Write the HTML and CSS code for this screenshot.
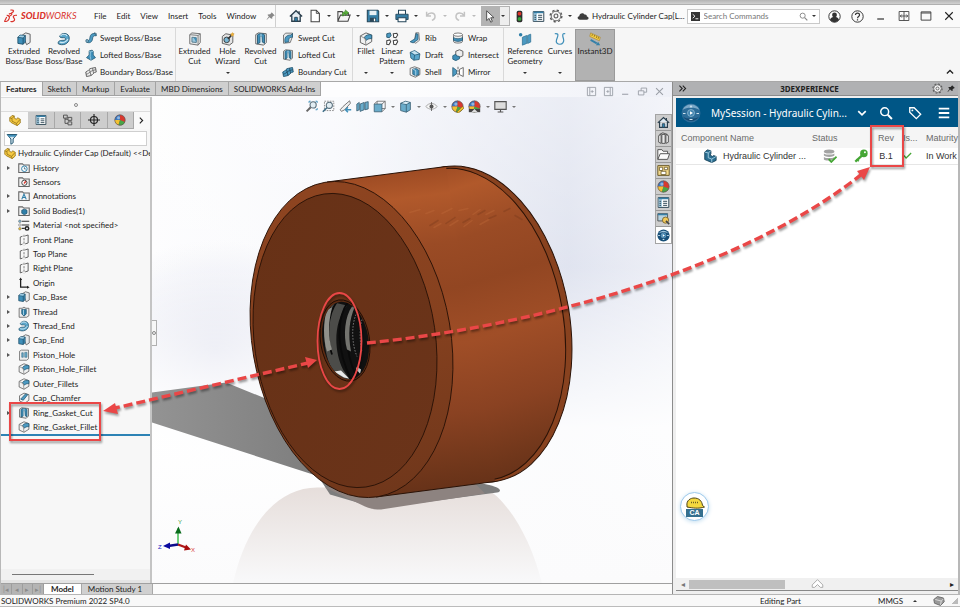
FILE: index.html
```html
<!DOCTYPE html>
<html lang="en">
<head>
<meta charset="utf-8">
<title>SOLIDWORKS Premium 2022</title>
<link rel="stylesheet" href="styles.css">
</head>
<body>
<svg class="sprite" aria-hidden="true">
  <defs>
    <symbol id="home" viewBox="0 0 16 16"><path d="M1 8.500 8 2l7 6.500M3.200 7.500V14h9.600V7.500" fill="#dfeaf1" stroke="#2b3f4d" stroke-width="1.500"/><path d="M6.500 14V9.500h3V14z" fill="#2f86b3" stroke="#2b3f4d"/><path d="M11.500 2.500v3" stroke="#2b3f4d" stroke-width="1.600"/></symbol>
    <symbol id="doc" viewBox="0 0 16 16"><path d="M3.500 1.500h6l3.500 3.500v9.500h-9.500z" fill="#fff" stroke="#444" stroke-width="1.200"/><path d="M9.500 1.500V5H13" fill="none" stroke="#444"/></symbol>
    <symbol id="open" viewBox="0 0 16 16"><path d="M1 14V3h5l1 2h6v3M1 14l3-7h11l-2.500 7z" fill="#f4f4f4" stroke="#444" stroke-width="1.200"/><path d="M6 8c0-4 1-5 3.500-5V1l4 3.300-4 3.300V5.500C8 5.500 7.500 6 7.500 8z" fill="#58ad3a" stroke="#2e7a1b" stroke-width=".6"/></symbol>
    <symbol id="save" viewBox="0 0 16 16"><path d="M1.500 1.500h12l1 1v12h-13z" fill="#377fa6" stroke="#24465a" stroke-width="1.200"/><path d="M4 2h8v5H4z" fill="#e9f0f4"/><path d="M4.500 10h7v4.500h-7z" fill="#2b4657"/><path d="M9 11h1.500v3H9z" fill="#fff"/></symbol>
    <symbol id="print" viewBox="0 0 16 16"><path d="M4 6V1.500h8V6" fill="#fff" stroke="#24465a" stroke-width="1.200"/><path d="M1 6h14v6H1z" fill="#377fa6" stroke="#24465a"/><path d="M3.500 10h9v4.500h-9z" fill="#fff" stroke="#24465a" stroke-width="1.200"/></symbol>
    <symbol id="undo" viewBox="0 0 16 16"><path d="M3 3v5h5M3.500 7.500c2-3.500 8-4 9 0 .5 2.500-1 4.500-3.500 5.500" fill="none" stroke="#c3c3c3" stroke-width="1.700"/></symbol>
    <symbol id="redo" viewBox="0 0 16 16"><path d="M13 3v5H8M12.500 7.500c-2-3.500-8-4-9 0-.5 2.500 1 4.500 3.500 5.500" fill="none" stroke="#c3c3c3" stroke-width="1.700"/></symbol>
    <symbol id="cursor" viewBox="0 0 16 16"><path d="M4.500 1v12l3-2.700 2 4.700 2-1-2-4.500h4z" fill="#fff" stroke="#444" stroke-width="1.100"/></symbol>
    <symbol id="light" viewBox="0 0 16 16"><rect x="4.500" y="1" width="7" height="14" rx="2" fill="#2d2d2d"/><circle cx="8" cy="4.500" r="2.300" fill="#e0342b"/><circle cx="8" cy="11" r="2.300" fill="#35a33b"/></symbol>
    <symbol id="list" viewBox="0 0 16 16"><path d="M1.500 2h13v12h-13z" fill="#fff" stroke="#2d4654" stroke-width="1.200"/><path d="M2 2.500h4v11H2z" fill="#9fc8de"/><path d="M2 2h12v2H2z" fill="#377fa6"/><path d="M3 6.500h2M3 9h2M3 11.500h2M7.500 6.500h5M7.500 9h5M7.500 11.500h5" stroke="#2d4654" stroke-width="1.200"/></symbol>
    <symbol id="gear" viewBox="0 0 16 16"><circle cx="8" cy="8" r="6.700" fill="none" stroke="#555" stroke-width="1.500" stroke-dasharray="2.600 2.660"/><circle cx="8" cy="8" r="5.500" fill="#f5f5f5" stroke="#555"/><circle cx="8" cy="8" r="2.200" fill="none" stroke="#555" stroke-width="1.200"/></symbol>
    <symbol id="cloud" viewBox="0 0 16 16"><path d="M4 13C0 13 0 8.500 3 8.200 3 4.500 8 2.500 10 6c2-.5 3.200.7 3.200 2.500C16.500 9 16 13 13 13z" fill="#3d3d3d"/></symbol>
    <symbol id="pin" viewBox="0 0 16 16"><path d="m9 2 5 5-1.500.5-2.500 2 0 3L8 12 5.500 9.800 1.500 14 1 13.500l3.500-4.800L2.500 6.500l.5-1 3.500-.3 2-2z" fill="#888"/></symbol>
    <symbol id="search" viewBox="0 0 16 16"><circle cx="6.500" cy="6.500" r="4.500" fill="none" stroke="currentColor" stroke-width="1.700"/><path d="m10 10 4.800 4.800" stroke="currentColor" stroke-width="2.200"/></symbol>
    <symbol id="prompt" viewBox="0 0 16 16"><path d="M0 0h16v16H0z" fill="#333"/><path d="m3 4 4 3.500L3 11M8 12h5" fill="none" stroke="#fff" stroke-width="1.600"/></symbol>
    <symbol id="user" viewBox="0 0 16 16"><circle cx="8" cy="8" r="7" fill="#fff" stroke="#333" stroke-width="1.200"/><circle cx="8" cy="6" r="3" fill="#333"/><path d="M2.500 12c1-3 3-3.500 5.500-3.500s4.500.5 5.500 3.500c-3 4-8 4-11 0z" fill="#333"/></symbol>
    <symbol id="help" viewBox="0 0 16 16"><circle cx="8" cy="8" r="7" fill="none" stroke="#333" stroke-width="1.200"/><path d="M5.500 6.200c0-3.200 5-3.200 5-.2 0 2-2.400 1.800-2.400 4M8 11.300V13" fill="none" stroke="#333" stroke-width="1.500"/></symbol>
    <symbol id="min" viewBox="0 0 16 16"><path d="M3 12h9" stroke="currentColor" stroke-width="1.500"/></symbol>
    <symbol id="span" viewBox="0 0 16 16"><path d="M1.500 2h13v12h-13zM8 2v12M3 8h10M5 6 3 8l2 2M11 6l2 2-2 2" fill="none" stroke="#444" stroke-width="1.200"/></symbol>
    <symbol id="max" viewBox="0 0 16 16"><path d="M1.500 2.500h13v11h-13zM1.500 4h13" fill="none" stroke="#444" stroke-width="1.300"/></symbol>
    <symbol id="close" viewBox="0 0 16 16"><path d="m3 3 10 10M13 3 3 13" stroke="currentColor" stroke-width="1.500"/></symbol>
    <symbol id="restore" viewBox="0 0 16 16"><path d="M2 7h8v6H2zM6 7V3h8v6h-4" fill="none" stroke="currentColor" stroke-width="1.300"/></symbol>
    <symbol id="pane" viewBox="0 0 16 16"><path d="M2 2h12v12H2zM5.500 2v12M11 8H8M9.500 6 7.500 8l2 2" fill="none" stroke="currentColor" stroke-width="1.300"/></symbol>

    <symbol id="extrude" viewBox="0 0 16 16"><path d="M6 3.500 10 1l5 1.500V12l-4 2.500z" fill="#e6e8e9" stroke="#555"/><path d="m1 6 2.500-2.500 6 .5v7.500L7 14l-6-1z" fill="#3f8fb9" stroke="#1f4f69"/><path d="m1 6 6 .7V14M7 6.700 9.500 4" fill="none" stroke="#1f4f69"/><path d="m1.500 5.800 2-1.800 5.200.4L7 6.200z" fill="#a4d0e6"/></symbol>
    <symbol id="revolve" viewBox="0 0 16 16"><path d="M3 5C5 0 14 .5 14 7c0 7-8 9-12.500 6.500C.5 10 4 9.500 8 9.500c2 0 2.500-2 1-2.800C7.500 6 3.500 7.500 3 5z" fill="#5aa6cb" stroke="#235670"/><path d="M4 4.500c2-2.500 6-2.500 7.500 0M3 11.500c3 1.500 8 0 9.500-3.500" fill="none" stroke="#cfe8f4" stroke-width="1.300"/></symbol>
    <symbol id="sweep" viewBox="0 0 16 16"><path d="M1.500 10.500C4 13 6 11 6.500 7.500 7 3.500 9 1.500 13.500 2l1.500 3c-4-.5-4.500 1-5 4.500-.6 4-4 6-7.500 4z" fill="#4c9ac2" stroke="#235670"/><ellipse cx="2.800" cy="12" rx="1.600" ry="2" fill="#9dcce3" stroke="#235670"/><path d="m12 1 3 1v3" fill="none" stroke="#235670"/></symbol>
    <symbol id="loft" viewBox="0 0 16 16"><path d="m5.500 2.500 4-1 1.500 1.500v5l3 3.500-6 3.500-6-3.500 3.500-3.500z" fill="#3f8fb9" stroke="#235670"/><path d="M5.500 2.500 7 4l4-1M7 4v6l1 5" fill="none" stroke="#a4d0e6"/></symbol>
    <symbol id="boundary" viewBox="0 0 16 16"><path d="M1 8c4-1 4-5 8-5l5-1 1 6c-4 0-4 4-8 5l-5 1z" fill="#eee" stroke="#555" stroke-width="1.200"/><path d="M1.500 11c5-1 5-5 13-6M6 5l2 8M10 3l1.500 7" fill="none" stroke="#555"/></symbol>
    <symbol id="boundcut" viewBox="0 0 16 16"><path d="M1 8c4-1 4-5 8-5l5-1 1 6c-4 0-4 4-8 5l-5 1z" fill="#4c9ac2" stroke="#235670" stroke-width="1.200"/><path d="M1.500 11c5-1 5-5 13-6M6 5l2 8M10 3l1.500 7" fill="none" stroke="#183e52"/></symbol>
    <symbol id="excut" viewBox="0 0 16 16"><path d="m2 3 2.500-2 9.500 1v10l-2.500 3L2 13.500z" fill="#e6e8e9" stroke="#666"/><path d="m2 3 9.500 1L14 2M11.500 4v11" fill="none" stroke="#777"/><path d="M4.500 6 9.500 6.500v5.500l-5-.5z" fill="#9cc8de" stroke="#4d7486"/><path d="M6.500 6.500h3v5z" fill="#3f8fb9"/></symbol>
    <symbol id="wizard" viewBox="0 0 16 16"><path d="m1.500 5 4-3 8 1.500V12l-4 3-8-2z" fill="#e4e4e4" stroke="#555"/><circle cx="6.500" cy="9" r="3.200" fill="#79b6d4" stroke="#333"/><path d="m8 8 6-6.500" stroke="#333" stroke-width="2"/><path d="m13 0 .8 1.700 1.900.3-1.500 1.300.3 2L13 4.200 11.500 5l.3-1.800-1.500-1.300 1.900-.2z" fill="#f0b23c"/></symbol>
    <symbol id="revcut" viewBox="0 0 16 16"><path d="m2 3 3-2 9 1v10l-3 3-9-1.500z" fill="#eef0f1" stroke="#555"/><path d="M4 3.500c0-2 8-2 8 0V13l-2.500-1.500L9 5H7v7L4 13.500z" fill="#3f8fb9" stroke="#235670"/><path d="M8 2v11" stroke="#cfe8f4"/></symbol>
    <symbol id="sweptcut" viewBox="0 0 16 16"><path d="M2 4 5 1.500h9V6l-3 8-9 1z" fill="#e6e8e9" stroke="#555"/><path d="M4 14c-1-6 1-10 8-10l2-2v5c-5 0-5 2-5 6z" fill="#4c9ac2" stroke="#235670"/></symbol>
    <symbol id="fillet" viewBox="0 0 16 16"><path d="M1.500 4.500 8 1l6.500 2.500V11L8 15l-6.500-3z" fill="#f0f1f1" stroke="#555"/><path d="M6 6c2.500-3 5.500-3.500 8.500-2.500v4c-3 0-4.500.5-6 2z" fill="#4c9ac2" stroke="#235670"/><path d="M1.500 4.500 7 7.500 8 15" fill="none" stroke="#888"/></symbol>
    <symbol id="pattern" viewBox="0 0 16 16"><path d="m2 2 4-1 1 3-2 2.500L2 6z" fill="#4c9ac2" stroke="#235670"/><path d="m9.500 2 4-.5 1 2-2 3-2.500-.5zM2 10l3.500-1 1 2-2 3.500L2 14zM9.500 10l4-1 1 2-2 3.500-2.500-.5z" fill="#fff" stroke="#444" stroke-width="1.200"/></symbol>
    <symbol id="rib" viewBox="0 0 16 16"><path d="M9 1h4l1 10-5 4-2-1z" fill="#e9e9e9" stroke="#666"/><path d="M9.500 2 8 9l-6.500 4 4 1.500L12 10V3z" fill="#4c9ac2" stroke="#235670"/></symbol>
    <symbol id="draft" viewBox="0 0 16 16"><path d="m1.500 4.500 6-2.500 7 4.500-1 7.500-7 1-4-3z" fill="#5aa6cb" stroke="#235670"/><path d="m1.500 4.500 6 3.500 7-1.500M7.500 8l-1 7" fill="none" stroke="#235670"/><path d="m3 4.400 4.500-1.600L13 6.200 7.800 7.200z" fill="#c7e2ef"/></symbol>
    <symbol id="shell" viewBox="0 0 16 16"><path d="m1.500 3 6-2 7 2.500v8l-6 3.500-7-3z" fill="#eee" stroke="#555"/><path d="m5 4 5-.5 3 2v6L9 13l-4-2z" fill="#3f8fb9" stroke="#235670"/><path d="m5 4 4 2v7" fill="none" stroke="#cfe8f4"/></symbol>
    <symbol id="wrap" viewBox="0 0 16 16"><path d="M2 3.500v9c0 3 12 3 12 0v-9" fill="#eee" stroke="#555"/><ellipse cx="8" cy="3.500" rx="6" ry="2.200" fill="#fff" stroke="#555"/><path d="M2 7.500c3 2 9 2 12 0v3.500c-3 2-9 2-12 0z" fill="#3f8fb9" stroke="#235670"/></symbol>
    <symbol id="intersect" viewBox="0 0 16 16"><path d="m5 3 5-2 4.500 2v6L10 11 5 9z" fill="#eee" stroke="#555" stroke-width="1.200"/><path d="m1 9 4-2 1 2 4 1v3l-5 2.500-4-2z" fill="#3f8fb9" stroke="#235670"/></symbol>
    <symbol id="mirror" viewBox="0 0 16 16"><path d="m1 2 5 3.500v5L1 14z" fill="#4c9ac2" stroke="#235670"/><path d="M8 1v14" stroke="#444" stroke-dasharray="3 1"/><path d="m15 2-5 2.500v7l5 2.500z" fill="#fff" stroke="#444"/></symbol>
    <symbol id="refgeo" viewBox="0 0 16 16"><path d="m5 6 5-2v9l-5 2zM11 4l3.500-1.500v9L11 13z" fill="#4c9ac2" stroke="#3a7c9e"/><circle cx="3" cy="3" r="2" fill="#2f7fa9"/></symbol>
    <symbol id="curves" viewBox="0 0 16 16"><path d="M2 2c6-1 3 4 2 7s1 5 4 5 5-3 4-6-2-7 2-6" fill="none" stroke="#3f8fb9" stroke-width="1.400"/></symbol>
    <symbol id="instant" viewBox="0 0 16 16"><path d="m3 1 11 5-1 4L2 5z" fill="#f6cf45" stroke="#a7822a" stroke-width=".7"/><path d="m5 2.500-.5 2M7.500 3.500l-.5 2M10 4.800l-.5 2M12 5.800l-.5 2" stroke="#6b5214" stroke-width=".8"/><path d="m3 9 7 4" stroke="#3580a8" stroke-width="2"/><path d="m9 15 5 0-2.500-4z" fill="#3580a8"/></symbol>

    <symbol id="part" viewBox="0 0 16 16"><path d="m1 5 3-3 3 .5 0 3 3 1.500 1.500-2L15 7v5l-4 3.500-8-4-2-2z" fill="#f5c944" stroke="#8f6d13"/><path d="m1 5 3 1 3-3.500M4 6v3.500l6 3 4.500-5M10 12.500l1 3" fill="none" stroke="#8f6d13"/></symbol>
    <symbol id="config" viewBox="0 0 16 16"><path d="M2 1.500h5v4H2zM8 4.500h5v4H8zM8 10.500h5v4H8zM4 5.500v7h4M4 7h4" fill="none" stroke="#555" stroke-width="1.300"/></symbol>
    <symbol id="target" viewBox="0 0 16 16"><circle cx="8" cy="8" r="4.700" fill="none" stroke="#222" stroke-width="1.500"/><path d="M8 0v16M0 8h16" stroke="#222" stroke-width="1.500"/></symbol>
    <symbol id="ball" viewBox="0 0 16 16"><circle cx="8" cy="8" r="7" fill="#d8392f"/><path d="M8 8V1a7 7 0 0 0-7 7z" fill="#3a79c2"/><path d="M8 8H1a7 7 0 0 0 5 6.700z" fill="#f2c232"/><path d="m8 8 6.500 2.500A7 7 0 0 1 6 14.700z" fill="#49a546"/><circle cx="8" cy="8" r="7" fill="none" stroke="#555" stroke-width=".8"/><circle cx="6" cy="5" r="2" fill="#fff" opacity=".45"/></symbol>
    <symbol id="funnel" viewBox="0 0 16 16"><path d="M1.500 2h13L9.500 8v5L6.500 15V8z" fill="#d5e8f1" stroke="#235670" stroke-width="1.300"/><path d="M2 2.500h12L12 5H4z" fill="#3f8fb9"/></symbol>
    <symbol id="folder" viewBox="0 0 16 16"><path d="M1 14V2.500h5L7.500 4H15v10z" fill="#f2f2f2" stroke="#666" stroke-width="1.400"/></symbol>
    <symbol id="f-hist" viewBox="0 0 16 16"><use href="#folder"/><circle cx="8.500" cy="9" r="3.700" fill="#fff" stroke="#2f7fa9" stroke-width="1.300"/><path d="M8.500 7v2.300h2" fill="none" stroke="#235670"/></symbol>
    <symbol id="f-sens" viewBox="0 0 16 16"><use href="#folder"/><circle cx="8.500" cy="9" r="3.500" fill="#fff" stroke="#444" stroke-width="1.300"/><path d="m8 10 2.500-3" stroke="#d8392f" stroke-width="1.800"/></symbol>
    <symbol id="f-ann" viewBox="0 0 16 16"><use href="#folder"/><path d="m5 12.500 3-7 3 7M6 10h4" fill="none" stroke="#2f7fa9" stroke-width="1.500"/></symbol>
    <symbol id="f-body" viewBox="0 0 16 16"><use href="#folder"/><path d="m5 7 3.500-1.500L12 7v4l-3.500 2L5 11z" fill="#2f7fa9" stroke="#235670"/></symbol>
    <symbol id="material" viewBox="0 0 16 16"><path d="M5 3h10M5 8h10M5 12.500h4" stroke="#333" stroke-width="1.500"/><circle cx="2.500" cy="3" r="1.700" fill="#7fb6d2" stroke="#666" stroke-width=".7"/><circle cx="2.500" cy="8" r="1.700" fill="#eee" stroke="#666" stroke-width=".7"/><circle cx="2.500" cy="13" r="1.700" fill="#f2c232" stroke="#666" stroke-width=".7"/><circle cx="12" cy="12.500" r="2.300" fill="none" stroke="#222" stroke-width="2"/></symbol>
    <symbol id="plane" viewBox="0 0 16 16"><path d="M3 4v10.500l3-1M3 4l3-1M9.500 2.500l4-1.200V12l-4 1.200" fill="none" stroke="#555" stroke-width="1.200"/><path d="M8 1v14" stroke="#555" stroke-dasharray="3 1.500"/></symbol>
    <symbol id="origin" viewBox="0 0 16 16"><path d="M3.500 3v10.500H13" fill="none" stroke="#222" stroke-width="1.700"/><path d="M1.500 4h4l-2-3.500zM12 11.500v4l3.500-2z" fill="#222"/></symbol>
    <symbol id="thread" viewBox="0 0 16 16"><path d="M1.500 3h4L8 1.500 10.500 3h4v10l-3 2h-10z" fill="#eee" stroke="#555"/><path d="M5 4.500h6v6l-3 3-3-3z" fill="#2f7fa9" stroke="#235670"/><path d="M7.300 5v7" stroke="#cfe8f4"/></symbol>
    <symbol id="hole" viewBox="0 0 16 16"><path d="m2 3 2.500-1.500H14V13l-2.500 2H2z" fill="#ececec" stroke="#666"/><path d="M5 5h2v6H5zM9 4.500h3V11H9z" fill="#6aaccb" stroke="#3a6f88" stroke-width=".8"/></symbol>
    <symbol id="chamfer" viewBox="0 0 16 16"><path d="M2 5 8 1.500l6.500 2V11L9 15l-7-3z" fill="#f4f4f4" stroke="#555"/><path d="m3.500 9.500 6.500-7 3 1L7 11z" fill="#4c9ac2" stroke="#235670"/></symbol>

    <symbol id="zoomfit" viewBox="0 0 16 16"><circle cx="10" cy="6" r="3.800" fill="#e2edf3" stroke="#556b78" stroke-width="1.300"/><path d="M7 9 2 14" stroke="#666" stroke-width="2.400"/><path d="M5 3.500V1.500h2M13 1.500h2v2M15 10v2h-2" fill="none" stroke="#3f8fb9" stroke-width="1.200"/></symbol>
    <symbol id="zoomarea" viewBox="0 0 16 16"><path d="M3 1.500h11.500V13H3z" fill="none" stroke="#777" stroke-dasharray="2 1.300"/><circle cx="9" cy="6.500" r="3.800" fill="#e2edf3" stroke="#556b78" stroke-width="1.300"/><path d="m6 9.500-5 5" stroke="#3f6f88" stroke-width="2"/></symbol>
    <symbol id="prev" viewBox="0 0 16 16"><path d="m13 1-8 7-3.500 4 1.500 2 4-2 7-8z" fill="#f1f1f1" stroke="#777" stroke-width="1.200"/><path d="M15 12H8m3-3-3 3 3 3" fill="none" stroke="#3f8fb9" stroke-width="1.800"/></symbol>
    <symbol id="section" viewBox="0 0 16 16"><path d="m1 5 3-2v9l-3 1.500zM5 5l5-2v9l-5 2zM11 3l4-1v9l-4 1z" fill="#6aaccb" stroke="#3a5f72"/></symbol>
    <symbol id="viewcube" viewBox="0 0 16 16"><path d="M5 1.500h10v9H5z" fill="none" stroke="#666"/><path d="M1.500 5H11v9.500H1.500z" fill="#6aaccb" stroke="#3a5f72"/><path d="m1.500 5 3.500-3.500M11 5l4-3.500M11 14.500l4-4" stroke="#666"/></symbol>
    <symbol id="cube" viewBox="0 0 16 16"><path d="m2 4 6-2.500L14 3v9l-5 3-7-2z" fill="#6aaccb" stroke="#3a5f72"/><path d="m2 4 7 1.500L14 3M9 5.500V15" fill="none" stroke="#3a5f72"/><path d="m3.500 3.900 4.600-1.800L12.500 3 9 4.800z" fill="#e2f0f7"/></symbol>
    <symbol id="eye" viewBox="0 0 16 16"><path d="M1 8c4-5 10-5 14 0-4 4.500-10 4.500-14 0z" fill="#f6f6f6" stroke="#999"/><circle cx="8" cy="8" r="2.500" fill="#555"/><path d="M8 2.500v11" stroke="#555"/></symbol>
    <symbol id="ballpen" viewBox="0 0 16 16"><use href="#ball"/><path d="m7 15 7-7 2 2-7 6z" fill="#f2c232" stroke="#7c6310" stroke-width=".7"/></symbol>
    <symbol id="scene" viewBox="0 0 16 16"><use href="#ball"/><path d="M1 11v4h14v-4z" fill="#444"/><path d="m4 15 4-4 4 4z" fill="#ddd"/></symbol>
    <symbol id="monitor" viewBox="0 0 16 16"><path d="M1 2h14v9.500H1z" fill="#ddd" stroke="#555" stroke-width="1.400"/><path d="M8 11.500v3M4.500 14.700h7" stroke="#555" stroke-width="1.400"/></symbol>
    <symbol id="library" viewBox="0 0 16 16"><path d="M2 4.500 5 3v11l-3-1.500zM6 3h4v11H6zM11 3l3 1.500v8L11 14z" fill="#e9e9e9" stroke="#444"/><path d="m3 3 4-2 6 2" fill="none" stroke="#444"/></symbol>
    <symbol id="openfolder" viewBox="0 0 16 16"><path d="M1 14V2h5l1.500 2H13v3M1 14l3-7h11.500L13 14z" fill="#fafafa" stroke="#555" stroke-width="1.200"/></symbol>
    <symbol id="palette" viewBox="0 0 16 16"><path d="M1 2h14v12H1z" fill="#f3d98c" stroke="#6b5a2a" stroke-width="1.200"/><path d="M3 4h4v4H3zM9 4h4v3H9zM5 9h6v4H5z" fill="#fff" stroke="#6b5a2a"/></symbol>
    <symbol id="recover" viewBox="0 0 16 16"><path d="M1 2h12v9H1z" fill="#b8d3e0" stroke="#444"/><path d="M1 2h12v2H1z" fill="#377fa6"/><circle cx="10.500" cy="10" r="3.800" fill="#f2c95a" stroke="#6b5a2a"/><path d="m11 11 4 4" stroke="#444" stroke-width="2"/></symbol>
    <symbol id="compass" viewBox="0 0 16 16"><circle cx="8" cy="8" r="7.500" fill="#174f78"/><path d="M2 5.500a7 7 0 0 1 12 0C11 3.500 5 3.500 2 5.500z" fill="#9fc4dc"/><circle cx="8" cy="8" r="3" fill="#2f79a8" stroke="#8fbad4" stroke-width=".7"/><path d="m7 6.300 2.800 1.700L7 9.700z" fill="#fff"/><path d="M1.500 8h2M12.500 8h2M7 13h2" stroke="#cfe3f0" stroke-width="1.300"/></symbol>
    <symbol id="compass-lg" viewBox="0 0 20 20"><circle cx="10" cy="10" r="9.500" fill="#2c6c98"/><path d="M1.500 7a9.300 9.300 0 0 1 17 0c-4-3.500-13-3.500-17 0z" fill="#7ba9c8"/><path d="M2 13.500c3 3 13 3 16 0a9.300 9.300 0 0 1-16 0z" fill="#164a72"/><circle cx="10" cy="10" r="3.500" fill="#4385b0" stroke="#9cc1da" stroke-width=".7"/><path d="m9 8.200 3 1.800-3 1.800z" fill="#fff"/><path d="M2 10.500h2.500M15.500 10.500H18M8.500 16.500h3M9 4.500l1-1.500 1 1.500" fill="none" stroke="#cfe3f0" stroke-width="1.100"/></symbol>
    <symbol id="bluepart" viewBox="0 0 16 16"><path d="m2 3.500 3-2.500 4 1v3.500L8 7l3 1.500 1-1 3 1v4.500L10 15.500 2 12z" fill="#2a6f92" stroke="#123f57"/><path d="m2 3.500 4 1L9 2M6 4.500V10l4 1.500 5-3M10 11.500v4" fill="none" stroke="#a9d0e3"/></symbol>
    <symbol id="db" viewBox="0 0 16 16"><ellipse cx="7" cy="2.800" rx="6" ry="2.300" fill="#a3a3a3"/><path d="M1 5c2 1.800 10 1.800 12 0v2.500c-2 2-10 2-12 0zM1 9c2 1.800 10 1.800 12 0v2c-2 2-10 3-12 1z" fill="#a3a3a3"/><path d="m6.500 11.500 3 3.300 6-6" fill="none" stroke="#45a635" stroke-width="2"/></symbol>
    <symbol id="key" viewBox="0 0 16 16"><path d="m1.500 14.500 7.500-7" stroke="#45a635" stroke-width="2.600"/><path d="m3 11.500 2.500 2.500" stroke="#45a635" stroke-width="1.800"/><circle cx="11.300" cy="5" r="4.300" fill="#45a635"/><circle cx="12.500" cy="3.800" r="1.100" fill="#fff"/></symbol>
    <symbol id="check" viewBox="0 0 16 16"><path d="m1.500 8 4 4.500 9-9" fill="none" stroke="#45a635" stroke-width="2.200"/></symbol>
    <symbol id="tag" viewBox="0 0 16 16"><path d="M2 2h5l7.500 7.500-5 5L2 7z" fill="none" stroke="#fff" stroke-width="1.500"/><circle cx="5" cy="5" r="1.100" fill="#fff"/></symbol>
    <symbol id="menu" viewBox="0 0 16 16"><path d="M2 3h12M2 8h12M2 13h12" stroke="#fff" stroke-width="2.200"/></symbol>
    <symbol id="chev" viewBox="0 0 16 16"><path d="m3 5.500 5 5 5-5" fill="none" stroke="currentColor" stroke-width="2.200"/></symbol>
    <symbol id="chevup" viewBox="0 0 16 16"><path d="m3 10.500 5-5 5 5" fill="none" stroke="currentColor" stroke-width="2"/></symbol>
    <symbol id="jump" viewBox="0 0 16 16"><path d="M1.500 8.500 8 2l6.500 6.500v3h-3L8 8l-3.500 3.500h-3z" fill="#fff" stroke="#aaa" stroke-width="1.200"/></symbol>
    <symbol id="chevr" viewBox="0 0 16 16"><path d="m5 3 5 5-5 5" fill="none" stroke="currentColor" stroke-width="2"/></symbol>
    <symbol id="dbl" viewBox="0 0 16 16"><path d="m2.500 3 5 5-5 5M8.500 3l5 5-5 5" fill="none" stroke="#222" stroke-width="1.900"/></symbol>
    <symbol id="tabs3d" viewBox="0 0 16 16"><path d="M1 6 6 2l8 2 1 5-5 5-8-3z" fill="#999" stroke="#555"/><path d="m3 6 8 2 3-3M11 8l-1 5" fill="none" stroke="#eee"/></symbol>
  </defs>
</svg>

<div class="backdrop"></div>

<header class="titlebar">
  <a class="brand" href="#" aria-label="SOLIDWORKS">
    <svg class="ds" viewBox="0 0 26 28"><path d="M12 2c7-1 8 3 1 6l-4 1.500M13 8c4 1 0 5-5 6M5 12c5 0 6 3 4 7s-6 5-8 4l4-8M24 12c-5-1-8 1-6 4s3 6-1 7-5 0-5 0" fill="none" stroke="#d9322b" stroke-width="2.200"/></svg>
    <span><b>SOLID</b>WORKS</span>
  </a>
  <nav class="menus">
    <a href="#">File</a><a href="#">Edit</a><a href="#">View</a><a href="#">Insert</a><a href="#">Tools</a><a href="#">Window</a>
    <button class="icon-btn" aria-label="Pin menu"><svg><use href="#pin"/></svg></button>
  </nav>
  <div class="quick">
    <button class="q" aria-label="Home"><svg><use href="#home"/></svg></button>
    <button class="q drop" aria-label="New"><svg><use href="#doc"/></svg></button>
    <button class="q drop" aria-label="Open"><svg><use href="#open"/></svg></button>
    <button class="q drop" aria-label="Save"><svg><use href="#save"/></svg></button>
    <button class="q drop" aria-label="Print"><svg><use href="#print"/></svg></button>
    <button class="q drop dim" aria-label="Undo"><svg><use href="#undo"/></svg></button>
    <button class="q drop dim" aria-label="Redo"><svg><use href="#redo"/></svg></button>
    <button class="q drop select" aria-label="Select"><svg><use href="#cursor"/></svg></button>
    <button class="q tool" aria-label="Rebuild"><svg><use href="#light"/></svg></button>
    <button class="q tool" aria-label="File properties"><svg><use href="#list"/></svg></button>
    <button class="q drop" aria-label="Options"><svg><use href="#gear"/></svg></button>
  </div>
  <div class="doc-name"><svg><use href="#cloud"/></svg><span>Hydraulic Cylinder Cap[L...</span></div>
  <label class="search"><svg><use href="#prompt"/></svg><input type="text" placeholder="Search Commands" aria-label="Search Commands"><svg class="glass"><use href="#search"/></svg><i class="caret"></i></label>
  <div class="window-btns">
    <button aria-label="Account"><svg><use href="#user"/></svg></button>
    <button aria-label="Help"><svg><use href="#help"/></svg></button>
    <button aria-label="Minimize"><svg><use href="#min"/></svg></button>
    <button aria-label="Span displays"><svg><use href="#span"/></svg></button>
    <button aria-label="Maximize"><svg><use href="#max"/></svg></button>
    <button aria-label="Close"><svg><use href="#close"/></svg></button>
  </div>
</header>

<section class="ribbon" aria-label="Features">
  <div class="group g-boss">
    <button class="big"><svg><use href="#extrude"/></svg><span>Extruded<br>Boss/Base</span></button>
    <button class="big"><svg><use href="#revolve"/></svg><span>Revolved<br>Boss/Base</span></button>
    <div class="stack">
      <button><svg><use href="#sweep"/></svg>Swept Boss/Base</button>
      <button><svg><use href="#loft"/></svg>Lofted Boss/Base</button>
      <button><svg><use href="#boundary"/></svg>Boundary Boss/Base</button>
    </div>
  </div>
  <div class="group g-cut">
    <button class="big"><svg><use href="#excut"/></svg><span>Extruded<br>Cut</span></button>
    <button class="big"><svg><use href="#wizard"/></svg><span>Hole<br>Wizard</span><i class="caret"></i></button>
    <button class="big"><svg><use href="#revcut"/></svg><span>Revolved<br>Cut</span></button>
    <div class="stack">
      <button><svg><use href="#sweptcut"/></svg>Swept Cut</button>
      <button><svg><use href="#revcut"/></svg>Lofted Cut</button>
      <button><svg><use href="#boundcut"/></svg>Boundary Cut</button>
    </div>
  </div>
  <div class="group g-feature">
    <button class="big"><svg><use href="#fillet"/></svg><span>Fillet</span><i class="caret"></i></button>
    <button class="big"><svg><use href="#pattern"/></svg><span>Linear<br>Pattern</span><i class="caret"></i></button>
    <div class="stack">
      <button><svg><use href="#rib"/></svg>Rib</button>
      <button><svg><use href="#draft"/></svg>Draft</button>
      <button><svg><use href="#shell"/></svg>Shell</button>
    </div>
    <div class="stack">
      <button><svg><use href="#wrap"/></svg>Wrap</button>
      <button><svg><use href="#intersect"/></svg>Intersect</button>
      <button><svg><use href="#mirror"/></svg>Mirror</button>
    </div>
  </div>
  <div class="group g-ref">
    <button class="big"><svg><use href="#refgeo"/></svg><span>Reference<br>Geometry</span><i class="caret"></i></button>
    <button class="big"><svg><use href="#curves"/></svg><span>Curves</span><i class="caret"></i></button>
    <button class="big pressed" aria-pressed="true"><svg><use href="#instant"/></svg><span>Instant3D</span></button>
  </div>
  <button class="collapse" aria-label="Collapse ribbon"><svg><use href="#chevup"/></svg></button>
</section>

<div class="workspace">
  <div class="main">
    <div class="tabrow">
      <nav class="tabs">
        <button class="on">Features</button><button>Sketch</button><button>Markup</button><button>Evaluate</button><button>MBD Dimensions</button><button>SOLIDWORKS Add-Ins</button>
      </nav>
      <div class="doc-btns">
        <button aria-label="Left pane"><svg><use href="#pane"/></svg></button>
        <button aria-label="Right pane"><svg class="flip"><use href="#pane"/></svg></button>
        <button aria-label="Minimize document"><svg><use href="#min"/></svg></button>
        <button aria-label="Restore document"><svg><use href="#restore"/></svg></button>
        <button aria-label="Close document"><svg><use href="#close"/></svg></button>
      </div>
    </div>
    <div class="body">
      <aside class="sidebar">
        <div class="grip"><i></i></div>
        <div class="ptabs">
          <button class="on" aria-label="Feature tree"><svg><use href="#part"/></svg></button>
          <button aria-label="Properties"><svg><use href="#list"/></svg></button>
          <button aria-label="Configurations"><svg><use href="#config"/></svg></button>
          <button aria-label="DimXpert"><svg><use href="#target"/></svg></button>
          <button aria-label="Display"><svg><use href="#ball"/></svg></button>
          <button class="more" aria-label="More"><svg><use href="#chevr"/></svg></button>
        </div>
        <label class="filter"><svg><use href="#funnel"/></svg><input type="text" aria-label="Filter"></label>
        <ul class="tree">
          <li class="root"><svg><use href="#part"/></svg>Hydraulic Cylinder Cap (Default) &lt;&lt;De</li>
          <li class="exp"><svg><use href="#f-hist"/></svg>History</li>
          <li><svg><use href="#f-sens"/></svg>Sensors</li>
          <li class="exp"><svg><use href="#f-ann"/></svg>Annotations</li>
          <li class="exp"><svg><use href="#f-body"/></svg>Solid Bodies(1)</li>
          <li><svg><use href="#material"/></svg>Material &lt;not specified&gt;</li>
          <li><svg><use href="#plane"/></svg>Front Plane</li>
          <li><svg><use href="#plane"/></svg>Top Plane</li>
          <li><svg><use href="#plane"/></svg>Right Plane</li>
          <li><svg><use href="#origin"/></svg>Origin</li>
          <li class="exp"><svg><use href="#extrude"/></svg>Cap_Base</li>
          <li class="exp"><svg><use href="#thread"/></svg>Thread</li>
          <li class="exp"><svg><use href="#revolve"/></svg>Thread_End</li>
          <li class="exp"><svg><use href="#extrude"/></svg>Cap_End</li>
          <li class="exp"><svg><use href="#hole"/></svg>Piston_Hole</li>
          <li><svg><use href="#fillet"/></svg>Piston_Hole_Fillet</li>
          <li><svg><use href="#fillet"/></svg>Outer_Fillets</li>
          <li><svg><use href="#chamfer"/></svg>Cap_Chamfer</li>
          <li class="exp"><svg><use href="#revcut"/></svg>Ring_Gasket_Cut</li>
          <li><svg><use href="#fillet"/></svg>Ring_Gasket_Fillet</li>
        </ul>
        <div class="rollback"></div>
        <div class="hscroll"><i></i></div>
      </aside>
      <div class="viewport">
        <svg class="scene" viewBox="152 97 520 487" preserveAspectRatio="xMidYMid slice" role="img" aria-label="Hydraulic cylinder cap model">
          <defs>
            <linearGradient id="bg" x1="0" y1="0" x2="1" y2="0"><stop offset="0" stop-color="#fdfdfe"/><stop offset=".35" stop-color="#f7f8fc"/><stop offset=".8" stop-color="#dde1ee"/><stop offset="1" stop-color="#eceef6"/></linearGradient>
            <linearGradient id="floor" x1="0" y1="0" x2="0" y2="1"><stop offset="0" stop-color="#fff" stop-opacity=".4"/><stop offset=".35" stop-color="#fff" stop-opacity=".1"/><stop offset=".68" stop-color="#fff" stop-opacity=".9"/><stop offset="1" stop-color="#fbfbfc"/></linearGradient>
            <radialGradient id="haze"><stop offset="0" stop-color="#dfe1ee"/><stop offset="1" stop-color="#dfe1ee" stop-opacity="0"/></radialGradient>
            <linearGradient id="side" gradientUnits="userSpaceOnUse" x1="430" y1="166" x2="470" y2="490"><stop offset="0" stop-color="#9c4a23"/><stop offset=".09" stop-color="#b1592b"/><stop offset=".24" stop-color="#9a4b25"/><stop offset=".38" stop-color="#924622"/><stop offset=".55" stop-color="#a04e27"/><stop offset=".76" stop-color="#8a4222"/><stop offset=".92" stop-color="#71371b"/><stop offset="1" stop-color="#653118"/></linearGradient>
            <linearGradient id="ring" gradientUnits="userSpaceOnUse" x1="400" y1="190" x2="400" y2="497"><stop offset="0" stop-color="#8d4420"/><stop offset=".45" stop-color="#86411f"/><stop offset="1" stop-color="#70371b"/></linearGradient>
            <linearGradient id="face" x1="0" y1="0" x2="1" y2="1"><stop offset="0" stop-color="#673116"/><stop offset="1" stop-color="#6b341a"/></linearGradient>
            <linearGradient id="shade" gradientUnits="userSpaceOnUse" x1="152" y1="0" x2="320" y2="0"><stop offset="0" stop-color="#939393"/><stop offset="1" stop-color="#7d7d7d"/></linearGradient>
            <linearGradient id="mirrorfade" gradientUnits="userSpaceOnUse" x1="0" y1="488" x2="0" y2="580"><stop offset="0" stop-color="#e6dedb"/><stop offset="1" stop-color="#f8f8f9"/></linearGradient>
            <clipPath id="bore"><ellipse cx="345.500" cy="341" rx="23" ry="39" transform="rotate(-9 345.500 341)"/></clipPath>
          </defs>
          <path d="M152 97h520v487H152z" fill="url(#bg)"/>
          <ellipse cx="215" cy="350" rx="130" ry="110" fill="url(#haze)"/>
          <path d="M152 97h520v487H152z" fill="url(#floor)"/>
          <path d="M233 584c12-55 42-96 84-96h168c24 14 46 52 57 96z" fill="url(#mirrorfade)"/>
          <path d="M152 393 226 383 268 400 330 495 378 509 497 493C505 491 496 486 482 484L372 494 152 423z" fill="url(#shade)"/>
          <path d="m325 488 150-4 10 10-104 16c-7 0-12-1-16-3z" fill="#8d8380"/>
          <g stroke="#2a1206">
            <ellipse cx="470.500" cy="324.500" rx="99.300" ry="159.400" transform="rotate(-9.600 470.500 324.500)" fill="#88421f"/>
            <ellipse cx="466" cy="325" rx="97.500" ry="157.500" transform="rotate(-9.600 466 325)" fill="url(#side)" stroke-width="1"/>
            <path d="M327 182.500 446 167 495 482 376 497.500z" fill="url(#side)" stroke="none"/>
            <path d="M327 182.500 446 167M376 497.500 495 482" stroke-width="1"/>
            <ellipse cx="351.500" cy="340" rx="99.300" ry="159.400" transform="rotate(-9.600 351.500 340)" fill="url(#ring)" stroke-width=".9"/>
            <ellipse cx="345" cy="341" rx="90.500" ry="148" transform="rotate(-8.100 345 341)" fill="url(#face)" stroke-width=".9"/>
          </g>
          <g fill="none" stroke-linecap="round">
            <path d="M410 213l10-3m6 4 8-3m8 3 10-5m7 2 9-2m5 6 7-5m6 5 8-4m-60 17 7-4m9 2 8-5m6 6 8-6m8 4 9-5" stroke="#bd683a" stroke-width="1.500" opacity=".4"/>
            <path d="M430 226l8-5m8 3 9-6m8 5 7-4m8-4 7-4m4 8 7-3m8-4 6-3m5 7 7 4" stroke="#74371b" stroke-width="1.500" opacity=".35"/>
          </g>
          <ellipse cx="345" cy="341" rx="24.500" ry="41" transform="rotate(-9 345 341)" fill="#5b2a12" stroke="#1c0c04" stroke-width=".9"/>
          <g clip-path="url(#bore)">
            <path d="M315 295h60v95h-60z" fill="#111"/>
            <path d="M334 303c-9 10-12 35-7 54s18 25 24 25l-8-12c-9-18-10-47 4-64z" fill="#4c4c49"/>
            <path d="M337 302c-10 14-11 36-5 53M349 301c-15 20-11 52 2 79M356 301c-13 20-11 52 0 75" fill="none" stroke="#0a0a0a" stroke-width="1.800"/>
            <path d="M327 310c-4 12-4 30 0 42l5-2c-4-12-4-26 0-42z" fill="#90908a"/>
            <path d="M352 307c-7 10-9 28-5 43l4 2c-3-17-2-32 4-45z" fill="#74746f"/>
            <path d="M356 315c-5 12-4 30 1 42M362 320c-3 11-2 23 0 32" fill="none" stroke="#777" stroke-width="1" stroke-dasharray="1.500 1.500"/>
            <path d="m334 372 10 6 5 1-8-8zM357 367l4 3-1 4-4-4z" fill="#e8e8e8"/>
          </g>
          <g font-family="Liberation Sans, sans-serif" font-size="6">
            <path d="M178 546v-17" stroke="#6fce7b" stroke-width="2"/><path d="m175 534 3.500-7 3 7z" fill="#0a6b1c"/>
            <path d="m178 545-10 1.500" stroke="#0c0c8c" stroke-width="2.400"/><path d="m170 543-7 3.500 7 3z" fill="#0a0aa0"/>
            <path d="m178 545 8 3" stroke="#b01818" stroke-width="2.400"/><path d="m186 545 5 5-7 1z" fill="#a80c0c"/>
            <text x="178" y="524" fill="#3a9a3a">Y</text><text x="158" y="549" fill="#2222c0">Z</text><text x="191" y="552" fill="#d84040">X</text>
          </g>
        </svg>
        <div class="hud">
          <button aria-label="Zoom to fit"><svg><use href="#zoomfit"/></svg></button>
          <button aria-label="Zoom to area"><svg><use href="#zoomarea"/></svg></button>
          <button aria-label="Previous view"><svg><use href="#prev"/></svg></button>
          <button aria-label="Section view"><svg><use href="#section"/></svg></button>
          <button class="dd" aria-label="View orientation"><svg><use href="#viewcube"/></svg></button>
          <button class="dd" aria-label="Display style"><svg><use href="#cube"/></svg></button>
          <button class="dd" aria-label="Hide or show"><svg><use href="#eye"/></svg></button>
          <button aria-label="Edit appearance"><svg><use href="#ballpen"/></svg></button>
          <button class="dd" aria-label="Apply scene"><svg><use href="#scene"/></svg></button>
          <button class="dd" aria-label="View settings"><svg><use href="#monitor"/></svg></button>
        </div>
        <div class="splitter"><i></i></div>
        <nav class="taskstrip">
          <button aria-label="Resources"><svg><use href="#home"/></svg></button>
          <button aria-label="Design library"><svg><use href="#library"/></svg></button>
          <button aria-label="File explorer"><svg><use href="#openfolder"/></svg></button>
          <button aria-label="View palette"><svg><use href="#palette"/></svg></button>
          <button aria-label="Appearances"><svg><use href="#ball"/></svg></button>
          <button aria-label="Custom properties"><svg><use href="#list"/></svg></button>
          <button aria-label="Recovery"><svg><use href="#recover"/></svg></button>
          <button class="on" aria-label="3DEXPERIENCE"><svg><use href="#compass"/></svg></button>
        </nav>
      </div>
    </div>
    <div class="model-tabs">
      <div class="steps"><button aria-label="First">|◂</button><button aria-label="Previous">◂</button><button aria-label="Next">▸</button><button aria-label="Last">▸|</button></div>
      <button class="mt on">Model</button><button class="mt study">Motion Study 1</button>
    </div>
  </div>

  <aside class="panel">
    <header class="panel-head">
      <button aria-label="Collapse panel"><svg><use href="#dbl"/></svg></button>
      <h2>3DEXPERIENCE</h2>
      <button class="opts" aria-label="Panel options"><svg><use href="#gear"/></svg></button>
      <button class="pinned" aria-label="Pin panel"><svg><use href="#pin"/></svg></button>
    </header>
    <div class="panel-body">
      <div class="session">
        <svg class="comp"><use href="#compass-lg"/></svg>
        <h3>MySession - Hydraulic Cylin...</h3>
        <button aria-label="Switch session"><svg class="sm"><use href="#chev"/></svg></button>
        <button aria-label="Search"><svg><use href="#search"/></svg></button>
        <button aria-label="Tags"><svg><use href="#tag"/></svg></button>
        <button aria-label="Menu"><svg><use href="#menu"/></svg></button>
      </div>
      <table>
        <colgroup><col><col class="c-status"><col class="c-key"><col class="c-rev"><col class="c-is"><col class="c-mat"></colgroup>
        <thead><tr><th>Component Name</th><th>Status</th><th></th><th class="mid">Rev</th><th class="in">Is...</th><th>Maturity</th></tr></thead>
        <tbody><tr>
          <td><span class="comp-name"><svg><use href="#bluepart"/></svg>Hydraulic Cylinder ...</span></td>
          <td class="mid"><svg class="stat"><use href="#db"/></svg></td>
          <td class="mid"><svg class="stat"><use href="#key"/></svg></td>
          <td class="mid">B.1</td>
          <td class="in"><svg class="tick"><use href="#check"/></svg></td>
          <td>In Work</td>
        </tr></tbody>
      </table>
      <button class="ca" aria-label="Collaboration assistant">
        <svg viewBox="0 0 20 12"><path d="M2 9C1 3 6 1 9 1c5 0 8 3 8.500 7.500l2 1.500c-6 2-12 1-17.500 0z" fill="#f4d83f" stroke="#4d4415"/><path d="M6 5.500h7" stroke="#6b6020" stroke-width="1.500" stroke-dasharray="1 1"/></svg>
        <b>CA</b>
      </button>
      <div class="pscroll"><span>◂</span><i></i><svg><use href="#jump"/></svg><span class="end">▸</span></div>
    </div>
  </aside>
</div>

<footer class="status">
  <span class="product">SOLIDWORKS Premium 2022 SP4.0</span>
  <span class="mode">Editing Part</span>
  <span class="units">MMGS</span>
  <i class="caret up"></i>
  <svg><use href="#tabs3d"/></svg>
  <i class="sizegrip"></i>
</footer>

<svg class="callouts" viewBox="0 0 960 607" preserveAspectRatio="none" aria-hidden="true">
  <g fill="none" stroke="#ea4747">
    <rect x="10" y="403" width="90" height="37" stroke-width="2"/>
    <rect x="871" y="126" width="32" height="40" stroke-width="2"/>
    <ellipse cx="339.500" cy="341" rx="22" ry="48" stroke-width="1.800"/>
    <path d="M111 409 308 363" stroke-width="3.400" stroke-dasharray="9 4"/>
    <path d="M367 343C520 328 735 275 862 174" stroke-width="3.400" stroke-dasharray="9 4"/>
  </g>
  <path d="m103 411 12-8 3 11zM317 360l-12-3 3 11zM870 167l-13 4 7 9z" fill="#ea4747"/>
</svg>
</body>
</html>
```
FILE: styles.css
```css
* { box-sizing: border-box; }

body {
  margin: 0;
  min-height: 100vh;
  display: flex;
  flex-direction: column;
  position: relative;
  overflow: hidden;
  background: #f6f6f6;
  color: #222;
  font: 8px/10px Lato, "Open Sans", sans-serif;
}

button, input { font: inherit; color: inherit; border: 0; background: none; padding: 0; margin: 0; }
button { display: flex; align-items: center; justify-content: center; white-space: nowrap; }
a { color: inherit; text-decoration: none; }
svg { display: block; flex: none; width: 12px; height: 12px; }
.sprite { position: absolute; width: 0; height: 0; }

.caret { border: 2px solid transparent; border-top-color: #333; border-bottom: 0; flex: none; }
.caret.up { border-top: 0; border-bottom: 2px solid #333; }

.backdrop { height: 5px; background: linear-gradient(#b4b4b4, #d2d2d2); border-bottom: 1px solid #b0b0b0; }

/* title bar */
.titlebar { display: flex; align-items: center; height: 23px; background: #fafafa; border-bottom: 1px solid #d8d8d8; }
.brand { display: flex; align-items: center; gap: 3px; width: 90px; padding-left: 4px; color: #d9322b; font-size: 9px; font-style: italic; }
.brand b { font-weight: 900; }
.brand .ds { width: 14px; height: 15px; }
.menus { display: flex; align-items: center; gap: 10px; padding: 0 0 0 4px; width: 186px; height: 22px; border-right: 1px solid #cfcfcf; }
.icon-btn svg { width: 10px; height: 10px; }
.quick { display: flex; align-items: center; padding-left: 12px; }
.q { height: 20px; padding: 0 1px; }
.q svg { width: 14px; height: 14px; }
.q:first-child { margin-right: 3px; }
.q.drop { width: 29px; justify-content: flex-start; gap: 5px; }
.q.drop::after { content: ""; border: 2px solid transparent; border-top-color: #333; border-bottom: 0; }
.q.dim::after { border-top-color: #bbb; }
.q.select { background: linear-gradient(90deg, #b3b3b3 18px, #eee 18px); border: 1px solid #b3b3b3; padding: 0 1px; }
.q.tool { width: 19px; }
.q.select svg, .q.tool svg { width: 13px; height: 13px; }
.doc-name { display: flex; align-items: center; gap: 3px; white-space: nowrap; flex: none; }
.search { display: flex; align-items: center; gap: 4px; flex: none; width: 133px; height: 15px; margin-left: 2px; padding: 0 3px; border: 1px solid #c9c9c9; background: #fff; }
.search svg { width: 9px; height: 9px; }
.search .glass { color: #888; }
.search input { flex: 1; min-width: 0; outline: 0; }
.search input::placeholder { color: #777; opacity: 1; }
.window-btns { display: flex; flex: 1; justify-content: space-between; padding: 0 5px 0 8px; }
.window-btns svg { width: 12px; height: 12px; }
.window-btns button:nth-child(-n+2) svg { width: 13px; height: 13px; }

/* ribbon */
.ribbon { display: flex; height: 54px; background: #f6f6f6; border-bottom: 1px solid #a8a8a8; }
.group { display: flex; padding-left: 4px; border-right: 1px solid #d9d9d9; }
.g-boss { width: 176px; }
.g-cut { width: 177px; padding-left: 2px; }
.g-feature { width: 151px; padding-left: 0; }
.g-ref { border: 0; padding-left: 1px; }
.big { flex-direction: column; justify-content: flex-start; width: 40px; height: 52px; margin-top: 1px; padding-top: 3px; line-height: 10px; }
.big svg { width: 14px; height: 14px; }
.big .caret { margin-top: auto; margin-bottom: 7px; }
.g-cut .big { width: 33px; }
.g-feature .big { width: 26px; }
.g-ref .big:nth-child(2) { width: 30px; }
.big.pressed { background: #b2b2b2; border: 1px solid #9a9a9a; padding-top: 2px; }
.stack { display: flex; flex-direction: column; padding: 1px 0 0 1px; }
.g-cut .stack { padding-left: 5px; }
.g-feature .stack { width: 43px; padding-left: 4px; }
.stack button { height: 17px; gap: 4px; justify-content: flex-start; }
.g-boss .stack button { gap: 3px; }
.collapse { margin-left: auto; align-self: flex-end; padding: 0 5px 4px 0; }
.collapse svg { width: 10px; height: 10px; }

/* workspace */
.workspace { flex: 1; display: flex; min-height: 0; }
.main { flex: 1; min-width: 0; display: flex; flex-direction: column; border-left: 1px solid #b8b8b8; }
.tabrow { display: flex; justify-content: space-between; height: 15px; background: linear-gradient(90deg, #fdfdfe 60%, #eef0f7); }
.tabs { display: flex; }
.tabs button { height: 14px; padding: 0 5px; background: #cfcfcf; border: solid #a3a3a3; border-width: 0 1px 1px 0; }
.tabs .on { background: #f6f6f6; border-bottom: 0; font-weight: bold; }
.doc-btns { display: flex; align-items: center; gap: 6px; padding: 4px 7px 0 0; color: #9a9ea6; }
.doc-btns svg { width: 11px; height: 11px; }
.flip { transform: scaleX(-1); }
.body { flex: 1; display: flex; min-height: 0; }

.sidebar { flex: none; width: 151px; display: flex; flex-direction: column; background: #f7f7f7; border-right: 2px solid #c4c4c4; overflow: hidden; }
.grip { display: flex; align-items: center; justify-content: center; height: 15px; border: 1px solid #dcdcdc; border-width: 1px 0; }
.grip i, .splitter i { width: 4px; height: 4px; border: 1px solid #888; border-radius: 50%; }
.ptabs { display: flex; height: 17px; padding-left: 1px; }
.ptabs button { flex: 1; background: #cdcdcd; border: solid #a8a8a8; border-width: 0 1px 1px 0; }
.ptabs .on, .ptabs .more { background: #f9f9f9; border-color: transparent; }
.ptabs .more { flex: 0 0 16px; }
.ptabs .more svg { width: 9px; height: 9px; }
.filter { display: flex; align-items: center; height: 15px; margin: 2px 3px 0; padding: 0 1px; border: 1px solid #cfcfcf; background: #fff; }
.filter input { flex: 1; min-width: 0; outline: 0; }
.tree { list-style: none; margin: 0; padding: 0; height: 288px; display: flex; flex-direction: column; }
.tree li { flex: 1; display: flex; align-items: center; gap: 3px; padding-left: 17px; white-space: nowrap; }
.tree .root { padding-left: 3px; gap: 2px; }
.tree .exp { padding-left: 6px; }
.tree .exp::before { content: ""; border: 2px solid transparent; border-left: 3px solid #555; border-right: 0; margin-right: 5px; }
.rollback { height: 2px; background: #2d83b5; }
.hscroll { margin-top: auto; height: 14px; padding: 5px 11px; border-bottom: 3px solid #e4e4e4; background: #f1f1f1; }
.hscroll i { display: block; width: 82px; height: 1px; background: #777; }

.viewport { flex: 1; min-width: 0; position: relative; overflow: hidden; }
.scene { position: absolute; inset: 0; width: 100%; height: 100%; }
.hud { position: absolute; top: 3px; left: 153px; display: flex; gap: 4px; }
.hud svg { width: 13px; height: 13px; }
.hud .dd { gap: 5px; }
.hud .dd::after { content: ""; border: 2px solid transparent; border-top-color: #777; border-bottom: 0; }
.splitter { position: absolute; left: 0; top: 223px; width: 5px; height: 26px; display: flex; align-items: center; border: 1px solid #b0b0b0; border-left: 0; background: #f7f7f7; }
.taskstrip { position: absolute; right: 0; top: 17px; width: 17px; display: flex; flex-direction: column; border: 1px solid #a4a4a4; }
.taskstrip button { height: 16px; background: #cdcdcd; border-bottom: 1px solid #999; }
.taskstrip .on { background: #fff; border: 0; }
.taskstrip svg { width: 13px; height: 13px; }

.model-tabs { display: flex; height: 11px; background: #fbfbfb; border-top: 1px solid #a0a0a0; }
.steps { display: flex; width: 43px; background: #b4b4b4; color: #8a8a8a; font-size: 7px; }
.steps button { flex: 1; border-right: 1px solid #9d9d9d; line-height: 8px; }
.mt { padding: 0 7px; background: #d0d0d0; border-right: 1px solid #a8a8a8; }
.mt.on { background: #fff; font-weight: bold; }
.mt.study { padding: 0 10px 0 6px; }

/* platform panel */
.panel { flex: none; width: 30%; display: flex; flex-direction: column; border-left: 1px solid #8c8c8c; border-right: 2px solid #b8b8b8; background: #efefef; }
.panel-head { display: flex; align-items: center; height: 14px; background: #b0b1b3; padding: 0 2px 0 5px; border-bottom: 1px solid #8c8c8c; }
.panel-head h2 { flex: 1; margin: 0; text-align: center; font: bold 8px/12px "Noto Sans", sans-serif; }
.panel-head svg { width: 9px; height: 9px; }
.opts { margin-right: 4px; }
.opts svg { width: 11px; height: 11px; }
.pinned { filter: brightness(.3); }
.panel-body { flex: 1; display: flex; flex-direction: column; margin: 2px 0 3px 3px; background: #fff; position: relative; border-bottom: 1px solid #888; }
.session { display: flex; align-items: center; height: 29px; background: #005686; color: #fff; padding-left: 5px; }
.session .comp { width: 20px; height: 20px; margin-right: 10px; }
.session h3 { margin: 0; flex: 1; font: 10px/14px "Noto Sans", sans-serif; white-space: nowrap; }
.session button { width: 29px; }
.session button:first-of-type { width: 19px; }
.session svg { width: 14px; height: 14px; }
.session .sm { width: 12px; height: 12px; }
table { width: 100%; table-layout: fixed; border-collapse: collapse; font: 9px/12px "Liberation Sans", Arial, sans-serif; color: #333; }
.c-status { width: 36px; }
.c-key { width: 25px; }
.c-rev { width: 26px; }
.c-is { width: 27px; }
.c-mat { width: 32px; }
th { height: 21px; padding: 0; font-weight: normal; text-align: left; color: #6a6a6a; background: #f5f5f5; white-space: nowrap; }
th:first-child { padding-left: 5px; }
td { height: 16px; padding: 0; border-bottom: 1px solid #e6e6e6; white-space: nowrap; overflow: hidden; }
.mid { text-align: center; }
.in { padding-left: 4px; }
.comp-name { display: flex; align-items: center; gap: 6px; padding-left: 27px; }
.comp-name svg { width: 14px; height: 14px; }
.stat { width: 14px; height: 14px; margin: auto; }
.tick { width: 9px; height: 9px; }
.ca { position: absolute; left: 4px; bottom: 69px; width: 29px; height: 29px; flex-direction: column; border: 1px solid #9cc9ec; border-radius: 50%; background: #fff; box-shadow: 0 1px 4px #c6dff0; }
.ca svg { width: 20px; height: 12px; }
.ca b { width: 17px; background: #35708f; color: #fff; font: bold 7px/8px "Liberation Sans", sans-serif; }
.pscroll { margin-top: auto; display: flex; align-items: center; height: 12px; background: #f0f0f0; color: #777; }
.pscroll span { width: 13px; text-align: center; }
.pscroll i { width: 34%; height: 9px; background: #bfbfbf; }
.pscroll svg { width: 13px; height: 13px; margin-left: 26px; }
.pscroll .end { margin-left: auto; color: #222; }

.status { display: flex; align-items: center; height: 13px; padding: 0 2px 0 1px; background: #f8f8f8; border-top: 1px solid #b5b5b5; border-bottom: 1px solid #bbb; }
.product { flex: 1; }
.mode { width: 118px; }
.units { width: 35px; }
.status svg { margin: 0 7px 0 16px; }
.sizegrip { width: 6px; height: 6px; background: linear-gradient(135deg, transparent 50%, #bbb 50%); }

.callouts { position: absolute; inset: 0; width: 100%; height: 100%; pointer-events: none; filter: drop-shadow(1px 2px 1px #0006); }
```
